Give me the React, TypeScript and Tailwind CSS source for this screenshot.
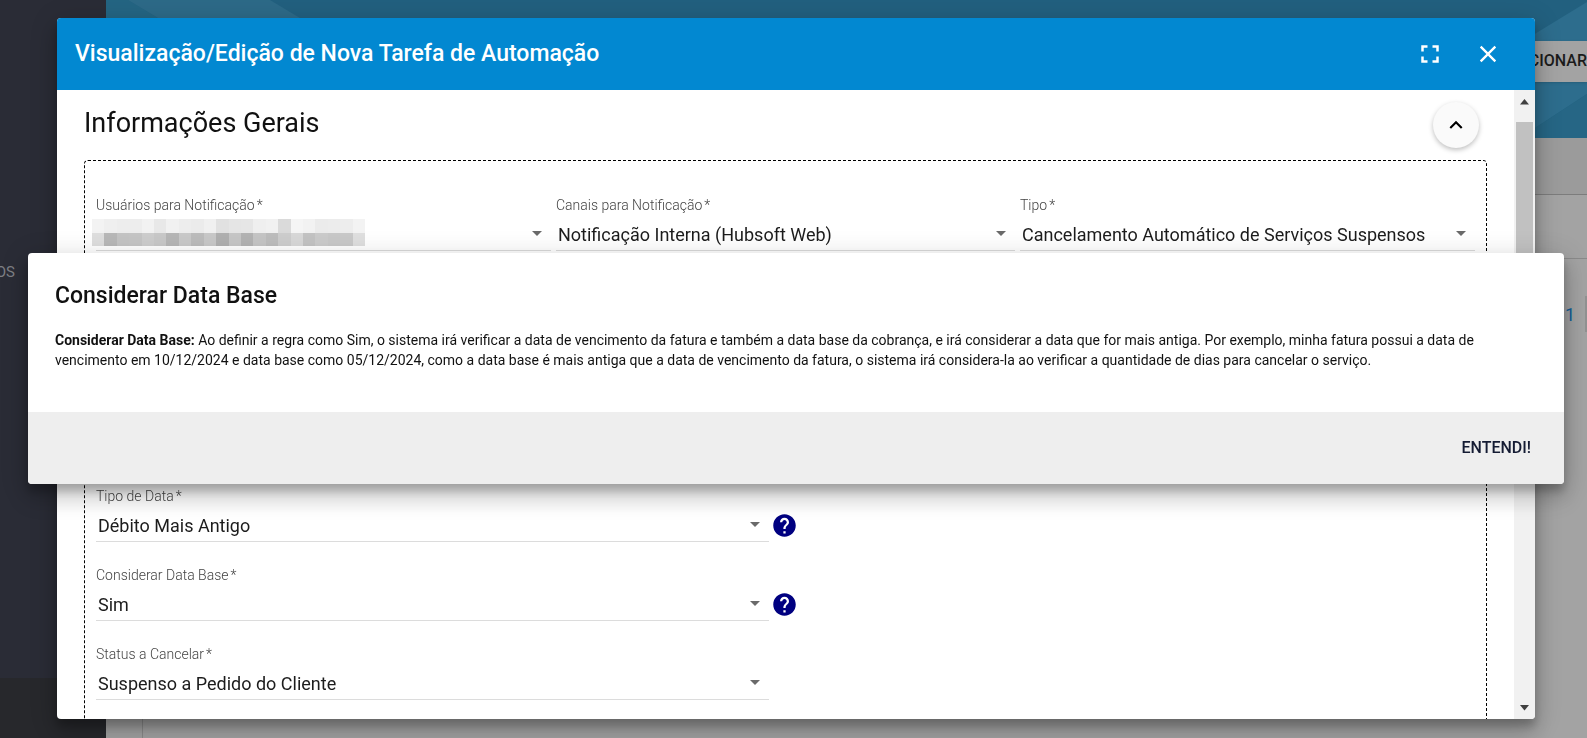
import { MdArrowDropDown, MdClose, MdExpandLess, MdFullscreen, MdHelp } from "react-icons/md"

const topFields = [
  { id: "usuarios", label: "Usuários para Notificação", value: "", masked: true },
  { id: "canais", label: "Canais para Notificação", value: "Notificação Interna (Hubsoft Web)" },
  { id: "tipo", label: "Tipo", value: "Cancelamento Automático de Serviços Suspensos" },
]

const ruleFields = [
  { id: "tipo-data", label: "Tipo de Data", value: "Débito Mais Antigo", help: true },
  { id: "data-base", label: "Considerar Data Base", value: "Sim", help: true },
  { id: "status", label: "Status a Cancelar", value: "Suspenso a Pedido do Cliente", help: false },
]

const maskRows = [
  ["#f3f3f3", "#efefef", "#ededed", "#ededed", "#f2f2f2", "#e8e8e8", "#f1f1f1", "#ededed", "#ebebeb", "#f0f0f0", "#e1e1e1", "#e5e5e5", "#e6e6e6", "#efefef", "#f1f1f1", "#dadada", "#f5f5f5", "#f2f2f2", "#ebebeb", "#ececec", "#ededed", "#f3f3f3"],
  ["#dedede", "#b8b8b8", "#c4c4c4", "#c5c5c5", "#cdcdcd", "#c8c8c8", "#b6b6b6", "#c9c9c9", "#bcbcbc", "#c8c8c8", "#b0b0b0", "#c6c6c6", "#b3b3b3", "#c5c5c5", "#bdbdbd", "#cdcdcd", "#d8d8d8", "#c3c3c3", "#cbcbcb", "#c8c8c8", "#c9c9c9", "#dfdfdf"],
]

function MaskedName() {
  return (
    <svg
      className="absolute -left-1 top-0 pointer-events-none"
      width="273"
      height="27"
      viewBox="0 0 22 2"
      preserveAspectRatio="none"
      shapeRendering="crispEdges"
      aria-hidden="true"
    >
      {maskRows.map((row, y) =>
        row.map((fill, x) => <rect key={`${x}-${y}`} x={x} y={y} width="1" height="1" fill={fill} />)
      )}
    </svg>
  )
}

type FieldProps = { id: string; label: string; value: string; masked?: boolean }

function SelectField({ id, label, value, masked }: FieldProps) {
  return (
    <div className="flex-1 min-w-0">
      <label htmlFor={id} className="flex gap-0.5 text-[14px] leading-5 font-light text-[#444]">
        {label}
        <span>*</span>
      </label>
      <div className="relative mt-1 border-b border-[#dcdcdc]">
        <select
          id={id}
          defaultValue={value}
          className="block w-full h-[31px] pl-0.5 pr-7 appearance-none bg-transparent text-[18px] text-[#1c1c1c] outline-none"
        >
          <option value={value}>{value}</option>
        </select>
        <MdArrowDropDown className="absolute right-0.5 top-0.5 w-6 h-6 text-[#6a6a6a] pointer-events-none" />
        {masked && <MaskedName />}
      </div>
    </div>
  )
}

function Backdrop() {
  return (
    <div className="flex min-h-screen overflow-hidden">
      <aside className="w-[106px] shrink-0 flex flex-col bg-[#2a2c36] text-[#7d7f84]">
        <div className="flex-1 pt-[260px]">
          <span className="w-[15px] flex justify-end text-[15px] leading-6">OS</span>
        </div>
        <div className="h-[60px] bg-[#27282c]" />
      </aside>
      <main className="flex-1 min-w-0 flex flex-col bg-[#a3a3a3]">
        <header className="relative h-[138px] shrink-0 bg-[#22607f]">
          <svg className="absolute inset-0 w-full h-full" viewBox="0 0 1481 138" preserveAspectRatio="none" aria-hidden="true">
            <polygon points="0,0 22,0 252,138 0,138" fill="#246583" />
            <polygon points="22,0 164,0 394,138 252,138" fill="#2d6a88" />
            <polygon points="1481,2 1481,94 1414,138 1350,138 1350,82" fill="#2d6d8d" />
            <polygon points="1481,94 1481,138 1414,138" fill="#266685" />
          </svg>
          <div className="relative flex justify-end pt-[41px]">
            <button className="h-[41px] pb-0.5 bg-[#a3a3a3] text-[16px] font-medium text-[#1b1b1b] shadow">
              ADICIONAR
            </button>
          </div>
        </header>
        <div className="ml-9 flex-1 flex flex-col border-l border-[#8b8b8b]">
          <div className="h-[57px] border-b border-[#7c7c7c] bg-[#9b9b9b]" />
          <div className="h-16 border-b border-[#8a8a8a]" />
          <div className="flex justify-end items-center gap-2.5 pt-[37px]">
            <a href="#1" className="text-[18px] text-[#115e98]">1</a>
            <span className="w-0.5 h-9 bg-[#929292]" />
          </div>
        </div>
      </main>
    </div>
  )
}

function TaskDialog() {
  return (
    <div className="fixed inset-0 pt-[18px] pr-[52px] pb-[19px] pl-[57px]">
      <section
        role="dialog"
        aria-labelledby="task-title"
        className="h-full flex flex-col overflow-hidden rounded bg-white shadow-[0_7px_9px_rgba(0,0,0,0.2),0_14px_22px_2px_rgba(0,0,0,0.14),0_5px_26px_4px_rgba(0,0,0,0.12)]"
      >
        <header className="h-[72px] shrink-0 flex items-center bg-[#0288d1] pl-[18px] pr-[33px] text-white">
          <h1 id="task-title" className="flex-1 text-[23px] leading-8 font-medium">
            Visualização/Edição de Nova Tarefa de Automação
          </h1>
          <button aria-label="Tela cheia" className="mr-[29px]">
            <MdFullscreen className="w-[30px] h-[30px]" />
          </button>
          <button aria-label="Fechar">
            <MdClose className="w-7 h-7" />
          </button>
        </header>
        <div className="flex-1 min-h-0 flex">
          <div className="flex-1 min-w-0 overflow-hidden px-[27px]">
            <div className="flex items-center justify-between h-[70px] pr-2">
              <h2 className="pb-1 text-[27px] leading-8 text-[#111]">Informações Gerais</h2>
              <button
                aria-label="Recolher"
                className="w-[46px] h-[46px] flex items-center justify-center rounded-full bg-[#fafafa] text-black shadow-[0_2px_5px_rgba(0,0,0,0.26)]"
              >
                <MdExpandLess className="w-[26px] h-[26px]" />
              </button>
            </div>
            <div className="rounded border border-dashed border-black px-[11px] pt-[34px] pb-10">
              <div className="grid grid-cols-[455fr_459fr_455fr] gap-[5px]">
                {topFields.map((field) => (
                  <SelectField key={field.id} {...field} />
                ))}
              </div>
              <div className="mt-[235px] flex flex-col gap-[23px]">
                {ruleFields.map(({ help, ...field }) => (
                  <div key={field.id} className="flex items-end">
                    <div className="w-[48.8%]">
                      <SelectField {...field} />
                    </div>
                    {help && (
                      <button aria-label={`Ajuda: ${field.label}`} className="mb-[3px] ml-0.5">
                        <MdHelp className="w-[27px] h-[27px] text-[#000080]" />
                      </button>
                    )}
                  </div>
                ))}
              </div>
            </div>
          </div>
          <div className="w-[21px] shrink-0 flex flex-col items-center bg-[#f1f1f1]" aria-hidden="true">
            <svg className="w-[21px] h-8" viewBox="0 0 21 32">
              <path d="M6 14.5 10.5 9 15 14.5z" fill="#404040" />
            </svg>
            <div className="w-[17px] h-[300px] bg-[#c1c1c1]" />
            <svg className="w-[21px] h-6 mt-auto" viewBox="0 0 21 24">
              <path d="M6 10 10.5 15.5 15 10z" fill="#404040" />
            </svg>
          </div>
        </div>
      </section>
    </div>
  )
}

function HelpDialog() {
  return (
    <div className="fixed inset-0 flex items-center pl-7 pr-[23px] pb-0.5">
      <section
        role="alertdialog"
        aria-labelledby="help-title"
        className="w-full overflow-hidden rounded bg-white text-[#111] shadow-[0_7px_9px_rgba(0,0,0,0.2),0_14px_22px_2px_rgba(0,0,0,0.14),0_5px_26px_4px_rgba(0,0,0,0.12)]"
      >
        <div className="px-[27px] pt-[27px] pb-[42px]">
          <h2 id="help-title" className="text-[23px] leading-8 font-medium">Considerar Data Base</h2>
          <p className="mt-[18px] text-[14px] leading-5">
            <b>Considerar Data Base:</b> Ao definir a regra como Sim, o sistema irá verificar a data de vencimento da
            fatura e também a data base da cobrança, e irá considerar a data que for mais antiga. Por exemplo, minha
            fatura possui a data de vencimento em 10/12/2024 e data base como 05/12/2024, como a data base é mais antiga
            que a data de vencimento da fatura, o sistema irá considera-la ao verificar a quantidade de dias para
            cancelar o serviço.
          </p>
        </div>
        <footer className="h-[72px] flex items-center justify-end bg-[#eee] pr-[33px]">
          <button className="text-[16px] font-medium text-[#141b33]">ENTENDI!</button>
        </footer>
      </section>
    </div>
  )
}

export default function App() {
  return (
    <div className="font-[Roboto,sans-serif]">
      <Backdrop />
      <TaskDialog />
      <HelpDialog />
    </div>
  )
}
